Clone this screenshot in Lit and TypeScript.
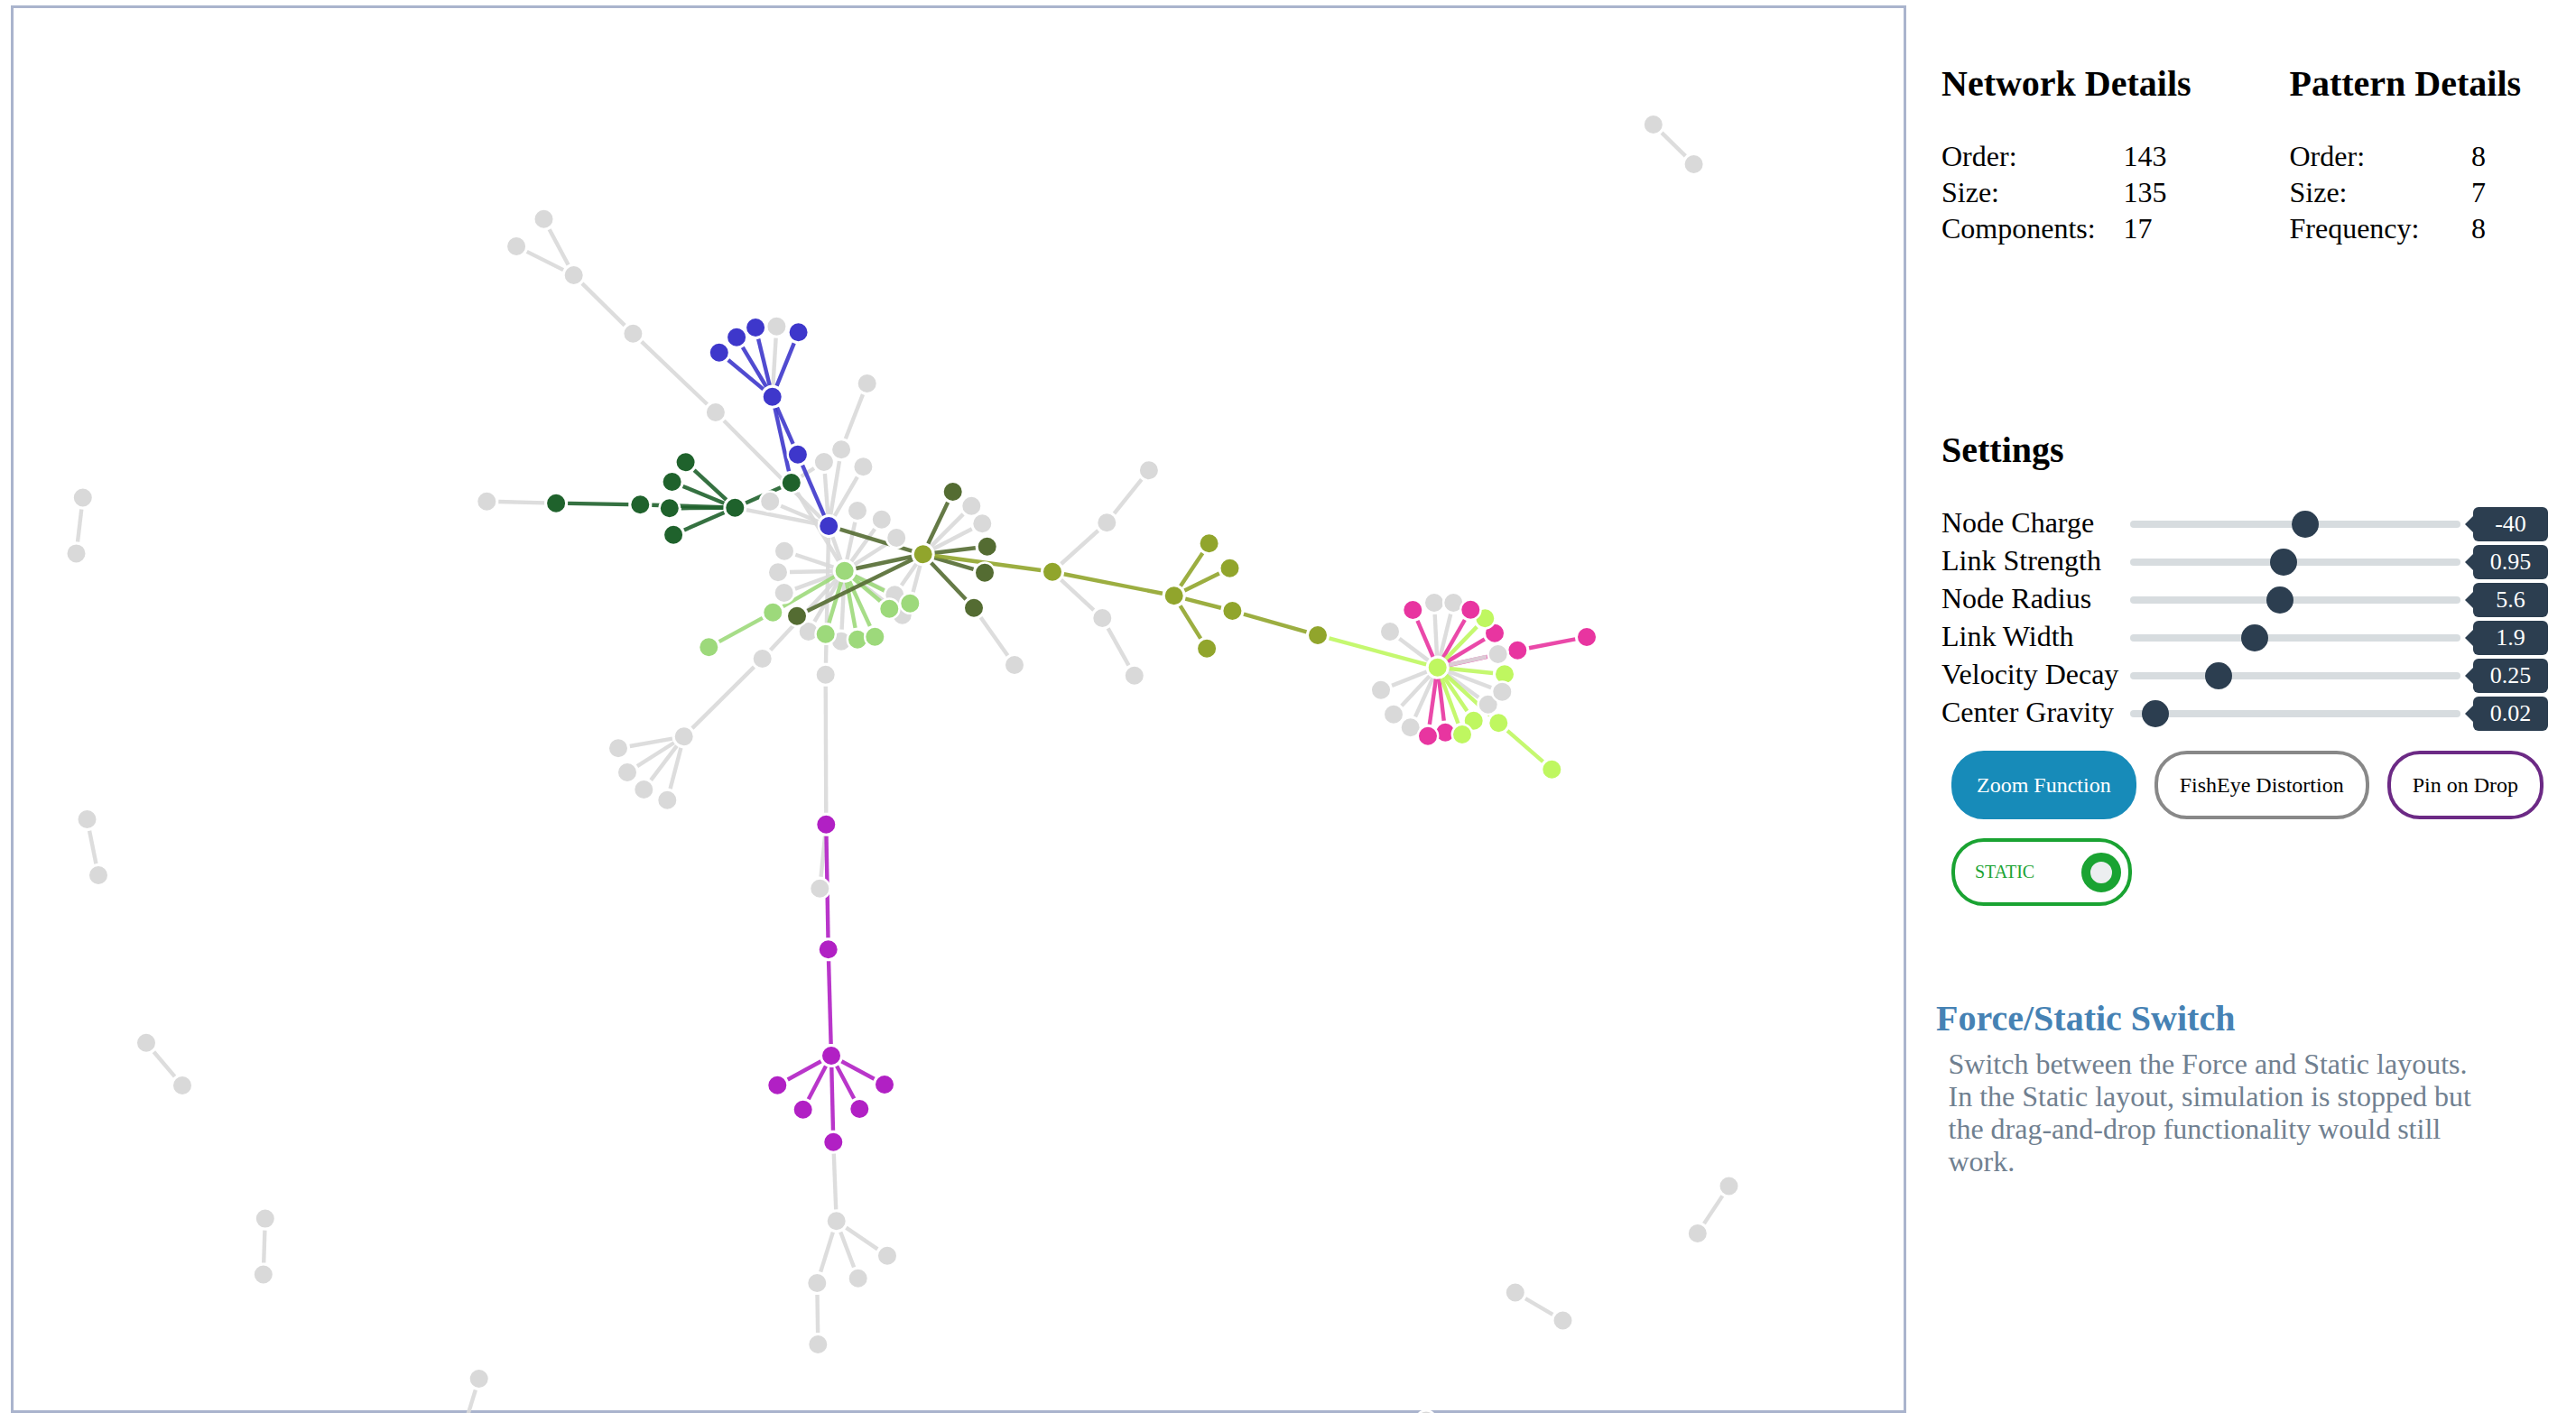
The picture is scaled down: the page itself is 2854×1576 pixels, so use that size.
import { LitElement, html, css, svg } from "lit";
import { customElement } from "lit/decorators.js";

const C: Record<string, string> = {
  g: "#d9d9d9",
  b: "#3e37cb",
  d: "#1f622c",
  o: "#546c32",
  v: "#91a52c",
  l: "#9dd97b",
  y: "#bff760",
  p: "#e835a0",
  m: "#b120c4",
};

// id: [x, y, colour]
const N: Record<string, [number, number, string]> = {
  a1: [602.5, 242.7, "g"], a2: [572.1, 273, "g"], a3: [635.7, 305, "g"], a4: [701.4, 369.7, "g"], a5: [792.9, 457, "g"],
  bh: [855.7, 439.7, "b"], b1: [796.8, 390.7, "b"], b2: [816.1, 373.7, "b"], b3: [837.1, 363, "b"], bg: [860.4, 361.7, "g"],
  b4: [884.6, 368.3, "b"], b5: [883.9, 503.7, "b"], bm: [918.2, 583, "b"],
  gh: [814.3, 562.7, "d"], g1: [759.6, 512.3, "d"], g2: [744.6, 534, "d"], g3: [741.8, 563.3, "d"], g4: [709.3, 559.3, "d"],
  g5: [616.1, 557.7, "d"], g6: [746.1, 592.7, "d"], g7: [876.8, 535, "d"], gx: [539.3, 555.7, "g"],
  c1: [853.2, 555.7, "g"], c2: [912.9, 512, "g"], c3: [932.1, 498.3, "g"], c4: [956.4, 517.3, "g"], c5: [960.7, 425, "g"],
  c6: [950, 566, "g"], c7: [976.8, 575.7, "g"], c8: [993.2, 596, "g"], c9: [869, 610.7, "g"], c10: [862, 634.3, "g"], c11: [868.7, 657, "g"],
  c12: [895.7, 700, "g"], c13: [932, 710.7, "g"], c14: [991.3, 659.3, "g"], c15: [999.7, 681.7, "g"], c16: [844.7, 730, "g"], c17: [914.7, 747.7, "g"],
  c18: [757.7, 816.3, "g"], c19: [685, 829.3, "g"], c20: [695, 856, "g"], c21: [713.3, 875, "g"], c22: [739.3, 886.7, "g"],
  lh: [935.7, 632.7, "l"], l1: [856.3, 678.7, "l"], l2: [785.3, 717.3, "l"], l3: [914.7, 702.7, "l"], l4: [950, 708.7, "l"], l5: [969.3, 705.7, "l"],
  l6: [985.3, 674.7, "l"], l7: [1008.3, 668.7, "l"],
  vh: [1022.7, 614.3, "v"], o1: [1055.7, 545, "o"], e1: [1076.3, 560.7, "g"], e2: [1088.3, 580.3, "g"], o2: [1093.7, 605.7, "o"], o3: [1091, 634.7, "o"],
  o4: [1079, 673.7, "o"], o5: [883, 682.7, "o"], e3: [1124, 737, "g"],
  v1: [1166, 633.7, "v"], f1: [1226.3, 579.3, "g"], f2: [1272.9, 521.3, "g"], f3: [1221.3, 685, "g"], f4: [1256.8, 748.7, "g"],
  v2: [1300.7, 660.3, "v"], v3: [1339.6, 602.3, "v"], v4: [1362.5, 629.7, "v"], v5: [1365.4, 677, "v"], v6: [1337.1, 718.7, "v"], v7: [1460, 704, "v"],
  yh: [1592.7, 739.7, "y"],
  h1: [1589, 668, "g"], h2: [1610.3, 668, "g"], h3: [1540, 700, "g"], h4: [1530, 764.7, "g"], h5: [1544, 791.7, "g"], h6: [1562.7, 806.3, "g"],
  p1: [1565.3, 676, "p"], p2: [1656, 701.7, "p"], y1: [1645.3, 685.3, "y"], p3: [1629.3, 675.7, "p"],
  p4: [1681.3, 720.7, "p"], p5: [1758, 706, "p"], h7: [1659.7, 725, "g"], y2: [1667, 747.3, "y"], h8: [1648.7, 780.7, "g"], h9: [1664.3, 766.7, "g"],
  y3: [1660.3, 801.3, "y"], y4: [1719.3, 852.7, "y"], y5: [1632.7, 798.7, "y"], p6: [1601.3, 811.7, "p"], p7: [1582, 815.7, "p"], y6: [1620, 814, "y"],
  m1: [915.3, 913.7, "m"], k1: [908.3, 984.7, "g"], m2: [917.7, 1052.3, "m"], mh: [921, 1170, "m"], m3: [861.3, 1202.7, "m"], m4: [889.7, 1229.7, "m"],
  m5: [923.3, 1265.7, "m"], m6: [952.3, 1229, "m"], m7: [980, 1202, "m"],
  k2: [926.7, 1353.3, "g"], k3: [983, 1391.7, "g"], k4: [950.7, 1416.7, "g"], k5: [905.3, 1422, "g"], k6: [906.3, 1490, "g"],
  s1: [1831.8, 138, "g"], s2: [1876.6, 182, "g"], s3: [91.8, 551.5, "g"], s4: [84.5, 613.4, "g"], s5: [96.5, 908, "g"], s6: [109, 970, "g"],
  s7: [162, 1155.8, "g"], s8: [202, 1203, "g"], s9: [293.8, 1350.6, "g"], s10: [291.8, 1412.5, "g"], s11: [530.7, 1528, "g"], s12: [510, 1595, "g"],
  s13: [1915.5, 1314.5, "g"], s14: [1880.8, 1367, "g"], s15: [1678.8, 1432.5, "g"], s16: [1731.5, 1463.5, "g"], s17: [1580, 1574.5, "g"],
};

const spokes = (hub: string, ids: string) => ids.split(" ").map((id) => [hub, id]);

const L: string[][] = [
  ["a1", "a3"], ["a2", "a3"], ["a3", "a4"], ["a4", "a5"], ["a5", "bm"],
  ["g7", "lh"], ["bm", "lh"], ["bm", "c17"], ["c17", "m1"], ["bm", "c1"], ["bm", "gh"], ["g7", "c2"], ["bm", "c2"], ["bm", "c3"], ["bm", "c4"], ["c3", "c5"],
  ...spokes("lh", "c6 c7 c8 c9 c10 c11 c12 c13 c14 c15 c16"), ["c16", "c18"],
  ...spokes("c18", "c19 c20 c21 c22"),
  ...spokes("vh", "e1 e2 c14 l7"), ["o4", "e3"],
  ["v1", "f1"], ["f1", "f2"], ["v1", "f3"], ["f3", "f4"],
  ["bh", "bg"], ["g5", "gx"], ["m1", "k1"], ["m5", "k2"],
  ...spokes("k2", "k3 k4 k5"), ["k5", "k6"],
  ...spokes("yh", "h1 h2 h3 h4 h5 h6 h8 h9"),
  ["s1", "s2"], ["s3", "s4"], ["s5", "s6"], ["s7", "s8"], ["s9", "s10"], ["s11", "s12"], ["s13", "s14"], ["s15", "s16"],
  ...spokes("bh", "b1 b2 b3 b4 b5 g7"), ["b5", "bm"],
  ...spokes("gh", "g1 g2 g3 g4 g6 g7"), ["g4", "g5"],
  ...spokes("lh", "l1 l3 l4 l5 l6 l7"), ["l1", "l2"],
  ...spokes("vh", "o1 o2 o3 o4 lh bm o5"),
  ["vh", "v1"], ["v1", "v2"], ...spokes("v2", "v3 v4 v5 v6"), ["v5", "v7"],
  ["v7", "yh"], ...spokes("yh", "p1 p2 p3 p6 p7 p4"), ["p4", "p5"],
  ...spokes("yh", "y1 y2 y3 y5 y6"), ["y3", "y4"],
  ["m1", "m2"], ["m2", "mh"], ...spokes("mh", "m3 m4 m5 m6 m7"),
  ["yh", "h7"],
];

// The first block of L and its final entry are grey; each coloured link takes its far end's colour,
// apart from the few whose pattern differs from that end.
const GREY_UNTIL = L.findIndex((l) => l[0] === "bh" && l[1] === "b1");
const OVERRIDES: Record<string, string> = {
  "vh-lh": C.o,
  "vh-bm": C.o,
  "vh-o5": C.o,
  "v7-yh": C.y,
  "bh-g7": C.b,
};
const linkColor = (i: number, l: string[]) => {
  if (i < GREY_UNTIL || i === L.length - 1) return C.g;
  return OVERRIDES[l.join("-")] ?? C[N[l[1]][2]];
};

const GAP = 13;
const segment = (l: string[]) => {
  const [x1, y1] = N[l[0]];
  const [x2, y2] = N[l[1]];
  const d = Math.hypot(x2 - x1, y2 - y1);
  const ux = (x2 - x1) / d;
  const uy = (y2 - y1) / d;
  return { x1: x1 + ux * GAP, y1: y1 + uy * GAP, x2: x2 - ux * GAP, y2: y2 - uy * GAP };
};

const SLIDERS: [string, string, number][] = [
  ["Node Charge", "-40", 53.27],
  ["Link Strength", "0.95", 46.1],
  ["Node Radius", "5.6", 44.9],
  ["Link Width", "1.9", 36.6],
  ["Velocity Decay", "0.25", 24.85],
  ["Center Gravity", "0.02", 3.87],
];

@customElement("app-root")
export class AppRoot extends LitElement {
  static styles = css`
    :host {
      display: block;
      width: 2854px;
      height: 1576px;
      overflow: hidden;
      background: #fff;
      font-family: "Liberation Serif", "Times New Roman", serif;
      color: #000;
    }
    .page {
      display: flex;
      align-items: flex-start;
      padding: 6px 0 0 12px;
    }
    .canvas {
      flex: none;
      box-sizing: border-box;
      width: 2100px;
      height: 1560px;
      border: 3px solid #aab4cd;
    }
    .canvas svg {
      display: block;
      width: 2100px;
      height: 1560px;
      margin: -3px;
    }
    .panel {
      flex: none;
      width: 680px;
      margin-left: 39px;
      padding-top: 63.5px;
    }
    h2 {
      margin: 0;
      font-size: 40px;
      line-height: 46px;
      font-weight: 700;
    }
    .details {
      display: grid;
      grid-template-columns: 385.5px auto;
      height: 406.5px;
    }
    .table {
      display: grid;
      grid-template-columns: 201.5px auto;
      grid-auto-rows: 40px;
      margin-top: 37px;
      font-size: 32px;
      line-height: 40px;
    }
    .sliders {
      display: grid;
      grid-auto-rows: 42px;
      margin-top: 38px;
    }
    .row {
      display: flex;
      align-items: center;
    }
    .row label {
      flex: none;
      width: 209px;
      margin-bottom: 4px;
      font-size: 32px;
      line-height: 36px;
    }
    input[type="range"] {
      flex: none;
      appearance: none;
      -webkit-appearance: none;
      width: 366px;
      height: 8px;
      margin: 0;
      border-radius: 4px;
      background: #d7dcdf;
      outline: none;
    }
    input[type="range"]::-webkit-slider-thumb {
      -webkit-appearance: none;
      appearance: none;
      width: 30px;
      height: 30px;
      border-radius: 50%;
      background: #2c3e50;
    }
    .value {
      position: relative;
      flex: none;
      box-sizing: border-box;
      width: 83px;
      height: 37.5px;
      margin-left: 14px;
      border-radius: 6px;
      background: #2c3e50;
      color: #fff;
      font-size: 26px;
      line-height: 37.5px;
      text-align: center;
    }
    .value::after {
      content: "";
      position: absolute;
      left: -9px;
      top: 9px;
      border-top: 10px solid transparent;
      border-bottom: 10px solid transparent;
      border-right: 10px solid #2c3e50;
    }
    .buttons {
      display: flex;
      flex-wrap: wrap;
      gap: 21px 20px;
      margin: 20px 0 0 11px;
      width: 670px;
    }
    .btn {
      box-sizing: border-box;
      height: 76px;
      padding: 0 24px;
      border: 4px solid;
      border-radius: 36px;
      background: #fff;
      font-size: 24px;
      line-height: 68px;
      white-space: nowrap;
    }
    .btn.zoom {
      background: #178bb9;
      border-color: #178bb9;
      color: #fff;
    }
    .btn.fish { border-color: #888; }
    .btn.pin { border-color: #6c2a85; }
    .toggle {
      box-sizing: border-box;
      display: flex;
      align-items: center;
      justify-content: space-between;
      width: 200px;
      height: 75px;
      padding: 0 8.5px 0 22px;
      border: 4px solid #1aa332;
      border-radius: 36px;
      color: #1aa332;
      font-size: 20px;
    }
    .knob {
      box-sizing: border-box;
      width: 44px;
      height: 44px;
      border: 10px solid #1aa332;
      border-radius: 50%;
      background: #eceef0;
    }
    .help {
      margin: 102px 0 0 -6px;
    }
    .help h3 {
      margin: 0;
      font-size: 40px;
      line-height: 46px;
      font-weight: 700;
      color: #4682b4;
    }
    .help p {
      width: 600px;
      margin: 9px 0 0 13.5px;
      font-size: 32px;
      line-height: 36px;
      color: #708090;
    }
  `;

  private graph() {
    return svg`
      <g stroke-width="4.4" stroke-opacity="0.9">
        ${L.map((l, i) => {
          const s = segment(l);
          return svg`<line x1=${s.x1} y1=${s.y1} x2=${s.x2} y2=${s.y2} stroke=${linkColor(i, l)}></line>`;
        })}
      </g>
      <g stroke="#fff" stroke-width="2.4">
        ${Object.values(N).map(([x, y, c]) => svg`<circle cx=${x} cy=${y} r="11.2" fill=${C[c]}></circle>`)}
      </g>`;
  }

  private table(rows: [string, string][]) {
    return html`<div class="table">
      ${rows.map(([k, v]) => html`<span>${k}</span><span>${v}</span>`)}
    </div>`;
  }

  render() {
    return html`
      <div class="page">
        <div class="canvas">
          <svg viewBox="12 6 2100 1560" xmlns="http://www.w3.org/2000/svg">${this.graph()}</svg>
        </div>
        <div class="panel">
          <div class="details">
            <div>
              <h2>Network Details</h2>
              ${this.table([["Order:", "143"], ["Size:", "135"], ["Components:", "17"]])}
            </div>
            <div>
              <h2>Pattern Details</h2>
              ${this.table([["Order:", "8"], ["Size:", "7"], ["Frequency:", "8"]])}
            </div>
          </div>
          <h2>Settings</h2>
          <div class="sliders">
            ${SLIDERS.map(
              ([name, val, pct]) => html`<div class="row">
                <label>${name}</label>
                <input type="range" min="0" max="100" step="0.01" .value=${String(pct)} />
                <span class="value">${val}</span>
              </div>`
            )}
          </div>
          <div class="buttons">
            <div class="btn zoom">Zoom Function</div>
            <div class="btn fish">FishEye Distortion</div>
            <div class="btn pin">Pin on Drop</div>
            <div class="toggle"><span>STATIC</span><span class="knob"></span></div>
          </div>
          <div class="help">
            <h3>Force/Static Switch</h3>
            <p>Switch between the Force and Static layouts. In the Static layout, simulation is stopped but the drag-and-drop functionality would still work.</p>
          </div>
        </div>
      </div>
    `;
  }
}
